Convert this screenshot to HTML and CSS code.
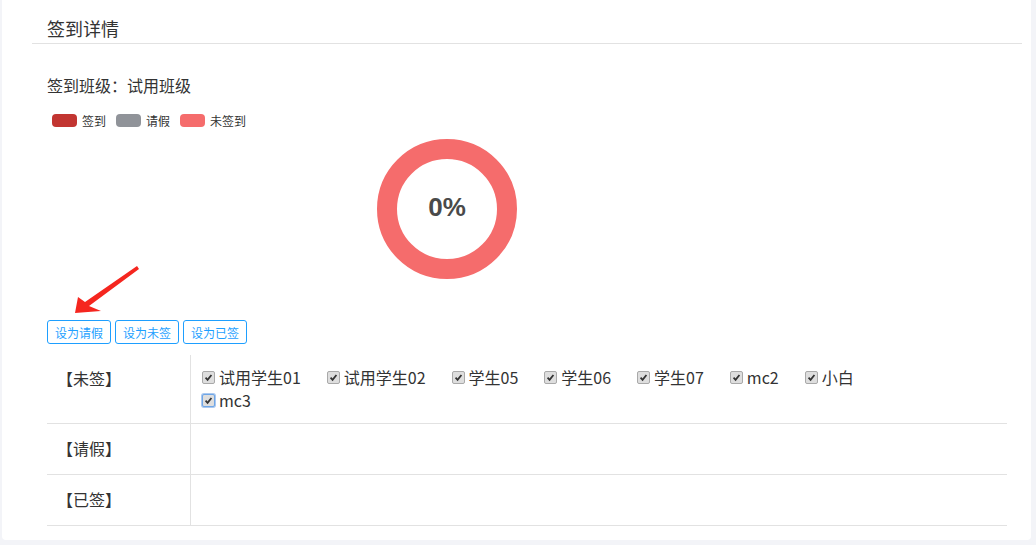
FILE: index.html
```html
<html>
    <head>
        <title>签到详情</title>
        <meta charset="utf-8">
        <link rel="stylesheet" href="styles.css">
    </head>
    <body>
        <div class="page">
            <div class="card">
                <div class="card-header">签到详情</div>

                <div class="card-body">
                    <div class="class-line">签到班级：试用班级</div>

                    <div class="chart">
                        <div class="legend">
                            <span class="legend-item"><i class="swatch sw-signed"></i>签到</span>
                            <span class="legend-item"><i class="swatch sw-leave"></i>请假</span>
                            <span class="legend-item"><i class="swatch sw-absent"></i>未签到</span>
                        </div>
                        <div class="donut"><span>0%</span></div>
                    </div>

                    <div class="toolbar">
                        <button class="btn">设为请假</button>
                        <button class="btn">设为未签</button>
                        <button class="btn">设为已签</button>
                    </div>

                    <table class="roster">
                        <tr>
                            <td class="label">【未签】</td>
                            <td>
                                <div class="names">
                                    <label class="name"><i class="cb"><svg viewBox="0 0 12 12"><path d="M2.8 6.2 L5 8.6 L9.2 3.2"/></svg></i>试用学生01</label>
                                    <label class="name"><i class="cb"><svg viewBox="0 0 12 12"><path d="M2.8 6.2 L5 8.6 L9.2 3.2"/></svg></i>试用学生02</label>
                                    <label class="name"><i class="cb"><svg viewBox="0 0 12 12"><path d="M2.8 6.2 L5 8.6 L9.2 3.2"/></svg></i>学生05</label>
                                    <label class="name"><i class="cb"><svg viewBox="0 0 12 12"><path d="M2.8 6.2 L5 8.6 L9.2 3.2"/></svg></i>学生06</label>
                                    <label class="name"><i class="cb"><svg viewBox="0 0 12 12"><path d="M2.8 6.2 L5 8.6 L9.2 3.2"/></svg></i>学生07</label>
                                    <label class="name"><i class="cb"><svg viewBox="0 0 12 12"><path d="M2.8 6.2 L5 8.6 L9.2 3.2"/></svg></i>mc2</label>
                                    <label class="name"><i class="cb"><svg viewBox="0 0 12 12"><path d="M2.8 6.2 L5 8.6 L9.2 3.2"/></svg></i>小白</label>
                                    <label class="name"><i class="cb cb-focus"><svg viewBox="0 0 12 12"><path d="M2.8 6.2 L5 8.6 L9.2 3.2"/></svg></i>mc3</label>
                                </div>
                            </td>
                        </tr>
                        <tr class="empty">
                            <td class="label">【请假】</td>
                            <td></td>
                        </tr>
                        <tr class="empty">
                            <td class="label">【已签】</td>
                            <td></td>
                        </tr>
                    </table>
                </div>
            </div>
        </div>

        <!-- annotation arrow drawn over the page -->
        <svg class="arrow" width="1036" height="545" viewBox="0 0 1036 545">
            <polygon points="75,313 78,297 85,302 137,266 139,269 89,306 101,311"/>
        </svg>
    </body>
</html>
```

FILE: styles.css
```css
body {
    margin: 0;
    background-color: #f3f4f8;
    font-family: "Noto Sans CJK SC", "Noto Sans", sans-serif;
    color: #333;
}

.page {
    padding: 0 5px 5px 2px;
}

.card {
    background-color: #fff;
    border-radius: 0 0 4px 4px;
    padding: 0 9px 0 30px;
}

.card-header {
    font-size: 18px;
    line-height: 24px;
    padding: 16px 15px 3px;
    border-bottom: 1px solid #e2e2e2;
}

.card-body {
    padding: 15px 15px 14px;
}

.class-line {
    font-size: 16px;
    line-height: 20px;
    margin-top: 16px;
}

/* Chart box, 800 wide like the original canvas */
.chart {
    position: relative;
    width: 800px;
    height: 200px;
    margin-top: 14px;
    display: flex;
    align-items: center;
    justify-content: center;
}

.legend {
    position: absolute;
    top: 5px;
    left: 5px;
    display: flex;
    gap: 10px;
    font-size: 12px;
    line-height: 13px;
}

.legend-item {
    display: flex;
    align-items: center;
    gap: 5px;
}

.swatch {
    display: inline-block;
    width: 25px;
    height: 13px;
    border-radius: 4px;
}

.sw-signed { background-color: #c23531; }
.sw-leave { background-color: #909399; }
.sw-absent { background-color: #f56c6c; }

.donut {
    width: 100px;
    height: 100px;
    border: 20px solid #f56c6c;
    border-radius: 50%;
    display: flex;
    align-items: center;
    justify-content: center;
}

.donut span {
    font-family: "Liberation Sans", Arial, sans-serif;
    font-weight: bold;
    font-size: 26px;
    color: #4a4a4a;
    margin-top: -3px;
}

.toolbar {
    margin-top: 11px;
    display: flex;
    gap: 4px;
}

.btn {
    height: 24px;
    padding: 0 7px;
    font-family: "Noto Sans CJK SC", sans-serif;
    font-size: 12px;
    color: #1e9fff;
    background-color: #fff;
    border: 1px solid #1e9fff;
    border-radius: 3px;
}

.roster {
    width: 100%;
    margin-top: 11px;
    border-collapse: collapse;
}

.roster td {
    padding: 11px 10px 11px 11px;
    border-bottom: 1px solid #e2e2e2;
    vertical-align: top;
}

.roster td.label {
    width: 123px;
    padding-left: 10px;
    font-size: 16px;
    line-height: 24px;
    border-right: 1px solid #e2e2e2;
}

.roster tr.empty td {
    height: 51px;
    box-sizing: border-box;
    padding-top: 12px;
}

.names {
    max-width: 700px;
    display: flex;
    flex-wrap: wrap;
    column-gap: 26px;
    font-size: 16px;
    line-height: 23px;
}

.name {
    display: flex;
    align-items: center;
}

.cb {
    width: 11px;
    height: 11px;
    margin-right: 4px;
    border: 1px solid #a9a9a9;
    border-radius: 2px;
    background-color: #dedede;
    display: flex;
}

.cb svg {
    width: 11px;
    height: 11px;
    fill: none;
    stroke: #333;
    stroke-width: 1.9;
}

.cb-focus {
    border-color: #6fa6e6;
    box-shadow: 0 0 0 1px #a9c8f0;
}

.arrow {
    position: absolute;
    top: 0;
    left: 0;
    pointer-events: none;
}

.arrow polygon {
    fill: #f5261f;
}
```
